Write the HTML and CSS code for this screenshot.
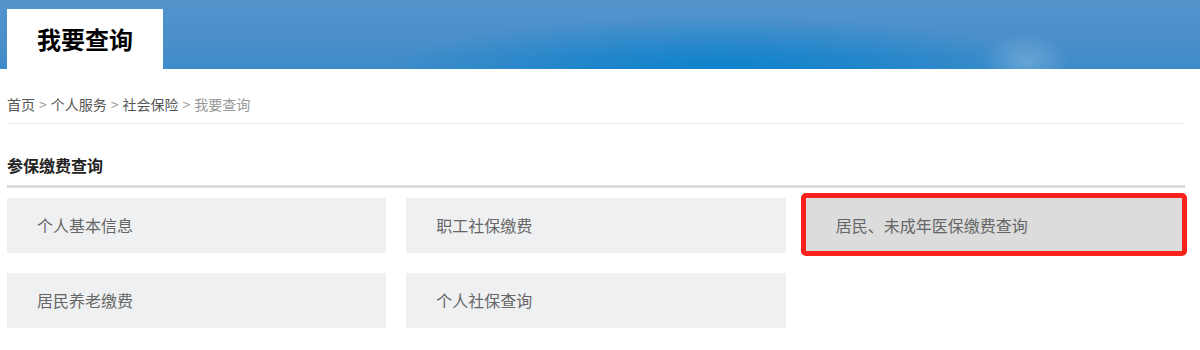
FILE: index.html
```html
<!DOCTYPE html>
<html lang="zh-CN">
<head>
    <meta charset="UTF-8">
    <meta name="viewport" content="width=device-width, initial-scale=1.0">
    <title>我要查询</title>
    <link rel="stylesheet" href="styles.css">
</head>
<body>
    <div class="banner">
        <div class="tab">我要查询</div>
    </div>

    <div class="main">
        <div class="crumbs">
            <a href="#">首页</a><span class="sep">&gt;</span><a href="#">个人服务</a><span class="sep">&gt;</span><a href="#">社会保险</a><span class="sep">&gt;</span><span class="current">我要查询</span>
        </div>

        <h2 class="section-title">参保缴费查询</h2>

        <div class="grid">
            <a class="card" href="#">个人基本信息</a>
            <a class="card" href="#">职工社保缴费</a>
            <a class="card card-active" href="#">居民、未成年医保缴费查询</a>
            <a class="card" href="#">居民养老缴费</a>
            <a class="card" href="#">个人社保查询</a>
        </div>
    </div>
</body>
</html>
```

FILE: styles.css
```css
body {
    margin: 0;
    font-family: "Noto Sans CJK SC", "Noto Sans", sans-serif;
    background-color: #fff;
    color: #333;
}
a {
    text-decoration: none;
}
.banner {
    height: 69px;
    padding-top: 9px;
    box-sizing: border-box;
    background:
        radial-gradient(ellipse 45px 28px at 1025px 62px, rgba(255, 255, 255, 0.22), rgba(255, 255, 255, 0) 100%),
        radial-gradient(ellipse 420px 70px at 720px 72px, #0a82cc, rgba(10, 130, 204, 0) 80%),
        linear-gradient(180deg, #5494cc 0%, #4a8fca 60%, #3d8bc9 100%);
}
.tab {
    width: 156px;
    height: 60px;
    margin-left: 7px;
    box-sizing: border-box;
    padding-left: 30px;
    background-color: #fff;
    color: #000;
    font-size: 24px;
    font-weight: bold;
    line-height: 60px;
}
.main {
    margin: 0 15px 0 7px;
}
.crumbs {
    padding: 25px 0 9px;
    font-size: 14px;
    line-height: 20px;
    color: #999;
    border-bottom: 1px solid #ebebeb;
}
.crumbs a {
    color: #555;
}
.crumbs .sep {
    margin: 0 4px;
}
.crumbs .current {
    color: #999;
}
.section-title {
    margin: 0;
    padding: 31px 0 10px;
    font-size: 16px;
    font-weight: bold;
    line-height: 20px;
    color: #222;
    border-bottom: 3px solid #dcdcdc;
}
.grid {
    display: grid;
    grid-template-columns: repeat(3, 1fr);
    grid-auto-rows: 55px;
    gap: 20px;
    margin-top: 10px;
}
.card {
    position: relative;
    display: block;
    padding-left: 30px;
    background-color: #eff0f2;
    color: #666;
    font-size: 16px;
    line-height: 55px;
}
.card-active {
    background-color: #dcdcdc;
}
.card-active::after {
    content: "";
    position: absolute;
    top: -5px;
    bottom: -3px;
    left: -5px;
    right: -2px;
    border: 5px solid #f8231a;
    border-radius: 5px;
}
```
